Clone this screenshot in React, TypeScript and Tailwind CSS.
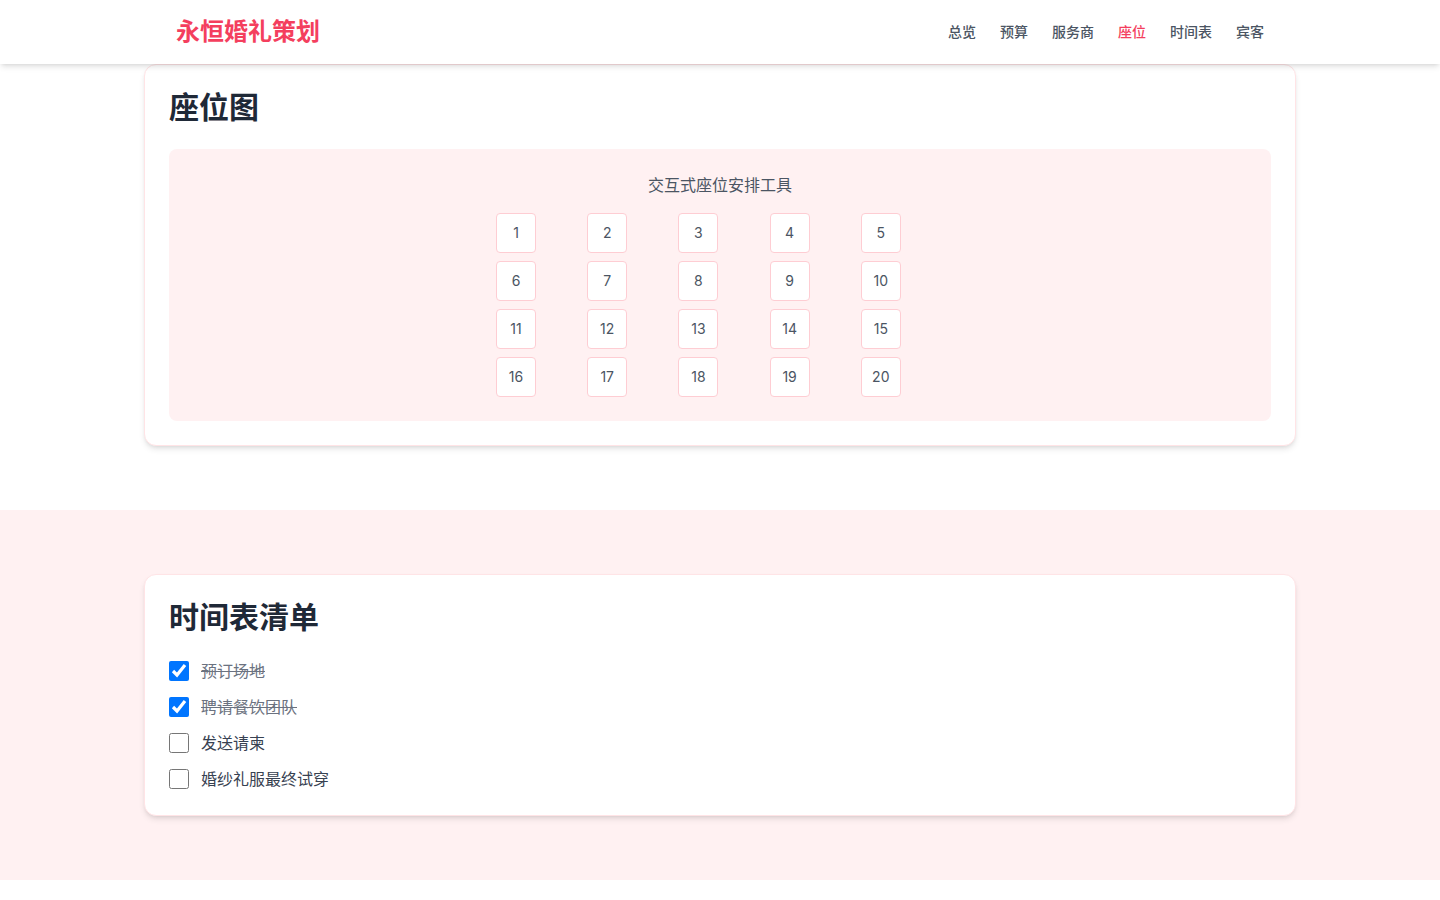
const links = ["总览", "预算", "服务商", "座位", "时间表", "宾客"];

const tasks = [
  { label: "预订场地", done: true },
  { label: "聘请餐饮团队", done: true },
  { label: "发送请柬", done: false },
  { label: "婚纱礼服最终试穿", done: false },
];

const seats = Array.from({ length: 20 }, (_, i) => i + 1);

export default function App() {
  return (
    <div className="min-h-[900px] bg-white font-['Inter','Noto_Sans_CJK_SC',sans-serif]">
      <header className="sticky top-0 z-10 h-16 bg-white shadow-md">
        <div className="mx-auto flex h-16 max-w-6xl items-center justify-between px-8">
          <div className="text-2xl font-semibold text-[#f43f5e]">永恒婚礼策划</div>
          <nav className="flex space-x-6">
            {links.map((l) => (
              <a
                key={l}
                href="#"
                className={
                  l === "座位"
                    ? "text-sm font-medium text-[#f43f5e]"
                    : "text-sm font-medium text-[#4b5563]"
                }
              >
                {l}
              </a>
            ))}
          </nav>
        </div>
      </header>

      <section className="pb-16">
        <div className="mx-auto max-w-6xl rounded-xl border border-[#ffe4e6] bg-white p-6 shadow-md">
          <h2 className="mb-6 text-3xl font-bold text-[#1f2937]">座位图</h2>
          <div className="rounded-lg bg-[#fff1f2] p-6">
            <p className="mb-4 text-center text-base text-[#4b5563]">交互式座位安排工具</p>
            <div className="mx-auto grid max-w-md grid-cols-5 gap-2">
              {seats.map((n) => (
                <div
                  key={n}
                  className="flex h-10 w-10 items-center justify-center rounded border border-[#fecdd3] bg-white text-sm text-[#4b5563]"
                >
                  {n}
                </div>
              ))}
            </div>
          </div>
        </div>
      </section>

      <section className="bg-[#fff1f2] py-16">
        <div className="mx-auto max-w-6xl rounded-xl border border-[#ffe4e6] bg-white p-6 shadow-md">
          <h2 className="mb-6 text-3xl font-bold text-[#1f2937]">时间表清单</h2>
          <ul className="space-y-3">
            {tasks.map((t) => (
              <li key={t.label} className="flex h-6 items-center">
                <input
                  type="checkbox"
                  defaultChecked={t.done}
                  className="m-0 h-5 w-5"
                />
                <span
                  className={
                    t.done
                      ? "ml-3 text-base text-[#6b7280] line-through"
                      : "ml-3 text-base text-[#374151]"
                  }
                >
                  {t.label}
                </span>
              </li>
            ))}
          </ul>
        </div>
      </section>
    </div>
  );
}
